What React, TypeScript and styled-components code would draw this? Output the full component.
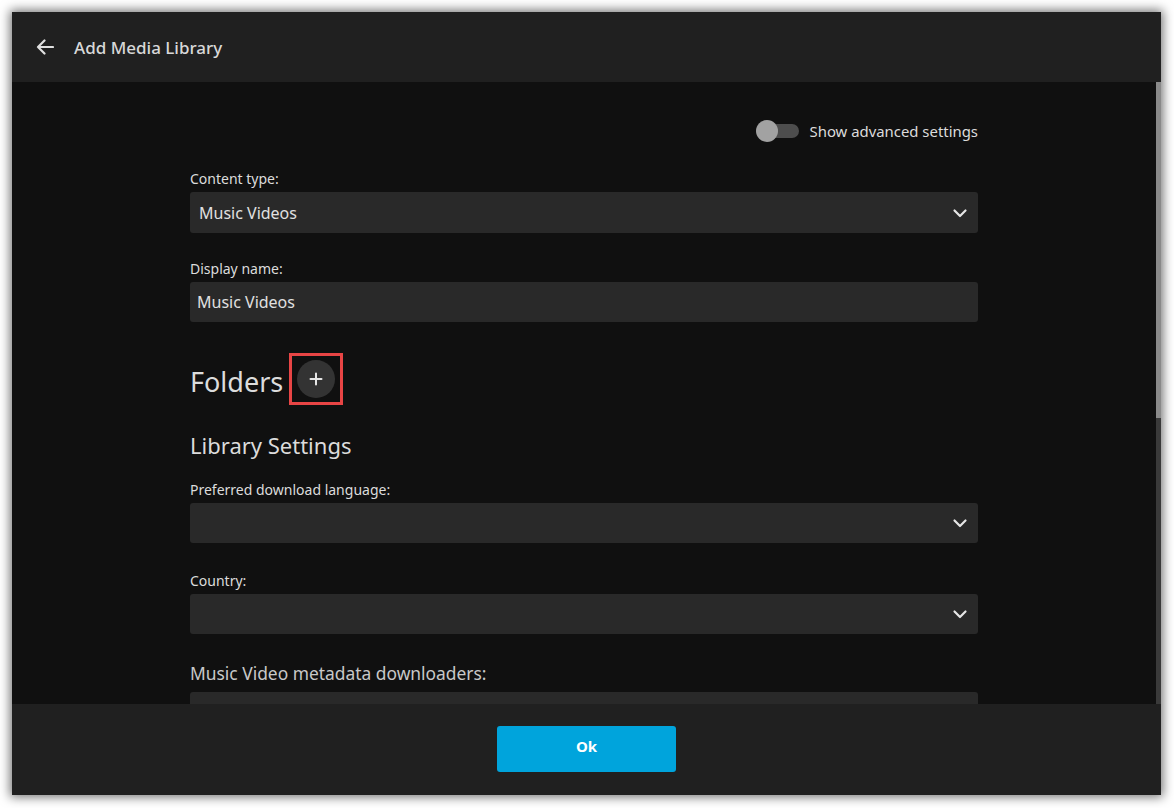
import styled, { createGlobalStyle } from "styled-components";

const GlobalStyle = createGlobalStyle`
  html, body {
    margin: 0;
    padding: 0;
    background: #ffffff;
  }
  body {
    font-family: "Noto Sans", "Open Sans", sans-serif;
  }
`;

const Page = styled.div`
  width: 1174px;
  height: 808px;
  padding: 12px;
  box-sizing: border-box;
`;

const Dialog = styled.div`
  width: 1149px;
  height: 783px;
  display: flex;
  flex-direction: column;
  background: #101010;
  box-shadow: 0 0 10px 2px rgba(0, 0, 0, 0.55);
  overflow: hidden;
`;

const Header = styled.div`
  height: 70px;
  flex-shrink: 0;
  display: flex;
  align-items: center;
  gap: 20px;
  padding-left: 24px;
  background: #202020;
  color: #dddddd;
`;

const HeaderTitle = styled.h2`
  margin: 0;
  font-size: 17px;
  font-weight: 500;
  color: #d8d8d8;
`;

const Body = styled.div`
  flex: 1;
  display: flex;
  min-height: 0;
`;

const Scroller = styled.div`
  flex: 1;
  overflow: hidden;
  display: flex;
  justify-content: center;
`;

const Form = styled.div`
  width: 788px;
  padding-top: 38px;
  display: flex;
  flex-direction: column;
`;

const Scrollbar = styled.div`
  width: 5px;
  display: flex;
  flex-direction: column;
  background: #3a3a3a;
`;

const Thumb = styled.div`
  height: 336px;
  background: #8a8a8a;
`;

const ToggleRow = styled.label`
  display: flex;
  justify-content: flex-end;
  align-items: center;
  gap: 10px;
  height: 22px;
  font-size: 14.9px;
  color: #dcdcdc;
`;

const Switch = styled.span`
  width: 43px;
  height: 22px;
  display: flex;
  align-items: center;
`;

const Track = styled.span`
  display: flex;
  align-items: center;
  width: 42px;
  height: 14px;
  border-radius: 7px;
  background: #4d4d4d;
`;

const Knob = styled.span`
  width: 22px;
  height: 22px;
  border-radius: 50%;
  background: #a2a2a2;
  margin-left: -1px;
`;

const Field = styled.div<{ $top: number }>`
  margin-top: ${(p) => p.$top}px;
  display: flex;
  flex-direction: column;
`;

const Label = styled.div<{ $big?: boolean }>`
  font-size: ${(p) => (p.$big ? "17.4px" : "14px")};
  line-height: ${(p) => (p.$big ? "24px" : "20px")};
  color: ${(p) => (p.$big ? "#c8c8c8" : "#dcdcdc")};
  margin-bottom: ${(p) => (p.$big ? "7px" : "3px")};
`;

const Select = styled.div<{ $h?: number }>`
  height: ${(p) => p.$h ?? 40}px;
  display: flex;
  align-items: center;
  justify-content: space-between;
  padding: 0 10px 0 9px;
  border-radius: 3px;
  background: #292929;
  color: #e0e0e0;
  font-size: 16px;
`;

const Input = styled.div`
  height: 40px;
  display: flex;
  align-items: center;
  padding: 0 7px;
  border-radius: 3px;
  background: #292929;
  color: #e0e0e0;
  font-size: 16px;
`;

const SectionRow = styled.div<{ $top: number }>`
  margin-top: ${(p) => p.$top}px;
  display: flex;
  align-items: center;
  gap: 6px;
`;

const SectionTitle = styled.h2<{ $size: number; $drop?: number }>`
  margin: 0;
  padding-top: ${(p) => p.$drop ?? 0}px;
  font-size: ${(p) => p.$size}px;
  line-height: 30px;
  font-weight: 400;
  color: #dcdcdc;
`;

const Highlight = styled.div`
  border: 3px solid #e84545;
  padding: 4px 5px;
  display: flex;
`;

const AddButton = styled.button`
  width: 38px;
  height: 38px;
  border-radius: 50%;
  border: none;
  padding: 0;
  background: #333333;
  color: #e6e6e6;
  display: flex;
  align-items: center;
  justify-content: center;
`;

const Footer = styled.div`
  height: 91px;
  flex-shrink: 0;
  display: flex;
  justify-content: center;
  padding-top: 22px;
  box-sizing: border-box;
  background: #202020;
`;

const OkButton = styled.button`
  width: 179px;
  height: 46px;
  border: none;
  border-radius: 3px;
  padding: 0 0 6px;
  background: #00a4dc;
  color: #ffffff;
  font-family: "Noto Sans", sans-serif;
  font-size: 15px;
  font-weight: 700;
`;

const Chevron = () => (
  <svg width="16" height="16" viewBox="0 0 16 16">
    <polyline
      points="2.5,5.5 8,11 13.5,5.5"
      fill="none"
      stroke="#e6e6e6"
      strokeWidth="2.2"
      strokeLinecap="round"
      strokeLinejoin="round"
    />
  </svg>
);

const BackArrow = () => (
  <svg width="18" height="16" viewBox="0 0 18 16">
    <path
      d="M17 8H2M8.5 1.5L2 8l6.5 6.5"
      fill="none"
      stroke="#e0e0e0"
      strokeWidth="2.2"
      strokeLinecap="round"
      strokeLinejoin="round"
    />
  </svg>
);

const Plus = () => (
  <svg width="14" height="14" viewBox="0 0 14 14">
    <path d="M7 1.5v11M1.5 7h11" stroke="#e6e6e6" strokeWidth="2" strokeLinecap="round" />
  </svg>
);

export default function App() {
  return (
    <>
      <GlobalStyle />
      <Page>
        <Dialog>
          <Header>
            <BackArrow />
            <HeaderTitle>Add Media Library</HeaderTitle>
          </Header>
          <Body>
            <Scroller>
              <Form>
                <ToggleRow>
                  <Switch>
                    <Track>
                      <Knob />
                    </Track>
                  </Switch>
                  Show advanced settings
                </ToggleRow>

                <Field $top={27}>
                  <Label>Content type:</Label>
                  <Select $h={41}>
                    Music Videos
                    <Chevron />
                  </Select>
                </Field>

                <Field $top={26}>
                  <Label>Display name:</Label>
                  <Input>Music Videos</Input>
                </Field>

                <SectionRow $top={31}>
                  <SectionTitle $size={27} $drop={5}>
                    Folders
                  </SectionTitle>
                  <Highlight>
                    <AddButton>
                      <Plus />
                    </AddButton>
                  </Highlight>
                </SectionRow>

                <SectionRow $top={25}>
                  <SectionTitle $size={22}>Library Settings</SectionTitle>
                </SectionRow>

                <Field $top={20}>
                  <Label>Preferred download language:</Label>
                  <Select>
                    <span />
                    <Chevron />
                  </Select>
                </Field>

                <Field $top={28}>
                  <Label>Country:</Label>
                  <Select>
                    <span />
                    <Chevron />
                  </Select>
                </Field>

                <Field $top={27}>
                  <Label $big>Music Video metadata downloaders:</Label>
                  <Select $h={80} />
                </Field>
              </Form>
            </Scroller>
            <Scrollbar>
              <Thumb />
            </Scrollbar>
          </Body>
          <Footer>
            <OkButton>Ok</OkButton>
          </Footer>
        </Dialog>
      </Page>
    </>
  );
}
